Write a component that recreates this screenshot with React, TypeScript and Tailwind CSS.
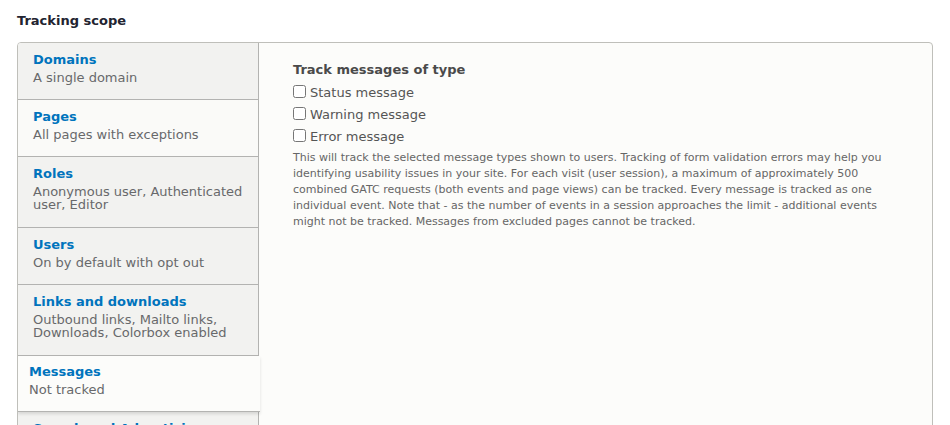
import React from "react";

type Tab = { title: string; desc: string[]; selected?: boolean; bg?: string };

const tabs: Tab[] = [
  { title: "Domains", desc: ["A single domain"] },
  { title: "Pages", desc: ["All pages with exceptions"], bg: "light" },
  { title: "Roles", desc: ["Anonymous user, Authenticated", "user, Editor"] },
  { title: "Users", desc: ["On by default with opt out"] },
  { title: "Links and downloads", desc: ["Outbound links, Mailto links,", "Downloads, Colorbox enabled"] },
  { title: "Messages", desc: ["Not tracked"], selected: true },
  { title: "Search and Advertising", desc: ["Not tracked"] },
];

function TabItem({ tab }: { tab: Tab }) {
  if (tab.selected) {
    return (
      <div className="relative z-10 bg-[#fcfcfa] border-b border-[#b3b3b1] pl-[11px] pt-[7px] pb-[15px] w-[242px] shadow-[0_2px_3px_rgba(0,0,0,0.12)]">
        <div className="text-[13px] leading-[18px] font-bold text-[#0074bd]">{tab.title}</div>
        <div className="mt-[2px] text-[13px] leading-[13px] text-[#68696b]">
          {tab.desc.map((d) => (
            <div key={d}>{d}</div>
          ))}
        </div>
      </div>
    );
  }
  const multi = tab.desc.length > 1;
  return (
    <div
      className={
        (tab.bg === "light" ? "bg-[#fafaf8] " : "bg-[#f2f2f0] ") +
        (multi ? "pb-[16px] " : "pb-[15px] ") +
        "border-b border-r border-[#b3b3b1] pl-[15px] pt-[8px] w-[241px]"
      }
    >
      <div className="text-[13px] leading-[18px] font-bold text-[#0074bd]">{tab.title}</div>
      <div className="mt-[2px] text-[13px] leading-[13px] text-[#68696b]">
        {tab.desc.map((d) => (
          <div key={d}>{d}</div>
        ))}
      </div>
    </div>
  );
}

function Check({ label }: { label: string }) {
  return (
    <label className="flex items-start h-[22px]">
      <input type="checkbox" className="m-0 mt-[3px] w-[13px] h-[13px] shrink-0" />
      <span className="ml-[4px] text-[13px] leading-[22px] text-[#555555]">{label}</span>
    </label>
  );
}

export default function App() {
  return (
    <div
      className="bg-white w-[950px] px-[17px] pt-[12px] pb-[40px]"
      style={{ fontFamily: '"DejaVu Sans", "Liberation Sans", sans-serif' }}
    >
      <div className="text-[13px] leading-[18px] font-bold text-[#222330]">Tracking scope</div>
      <div className="mt-[12px] flex border border-[#bfbfba] rounded-[4px] bg-[#fcfcfa] overflow-hidden">
        <div className="flex flex-col shrink-0 w-[242px]">
          {tabs.map((t) => (
            <TabItem key={t.title} tab={t} />
          ))}
        </div>
        <div className="flex-1 pl-[33px] pr-[30px] pt-[18px]">
          <div className="text-[13px] leading-[18px] font-bold text-[#4a4a4a]">Track messages of type</div>
          <div className="mt-[3px]">
            <Check label="Status message" />
            <Check label="Warning message" />
            <Check label="Error message" />
          </div>
          <p className="mt-[2px] text-[11px] leading-[16px] text-[#666666]">
            This will track the selected message types shown to users. Tracking of form validation errors may help you
            identifying usability issues in your site. For each visit (user session), a maximum of approximately 500
            combined GATC requests (both events and page views) can be tracked. Every message is tracked as one
            individual event. Note that - as the number of events in a session approaches the limit - additional events
            might not be tracked. Messages from excluded pages cannot be tracked.
          </p>
        </div>
      </div>
    </div>
  );
}
